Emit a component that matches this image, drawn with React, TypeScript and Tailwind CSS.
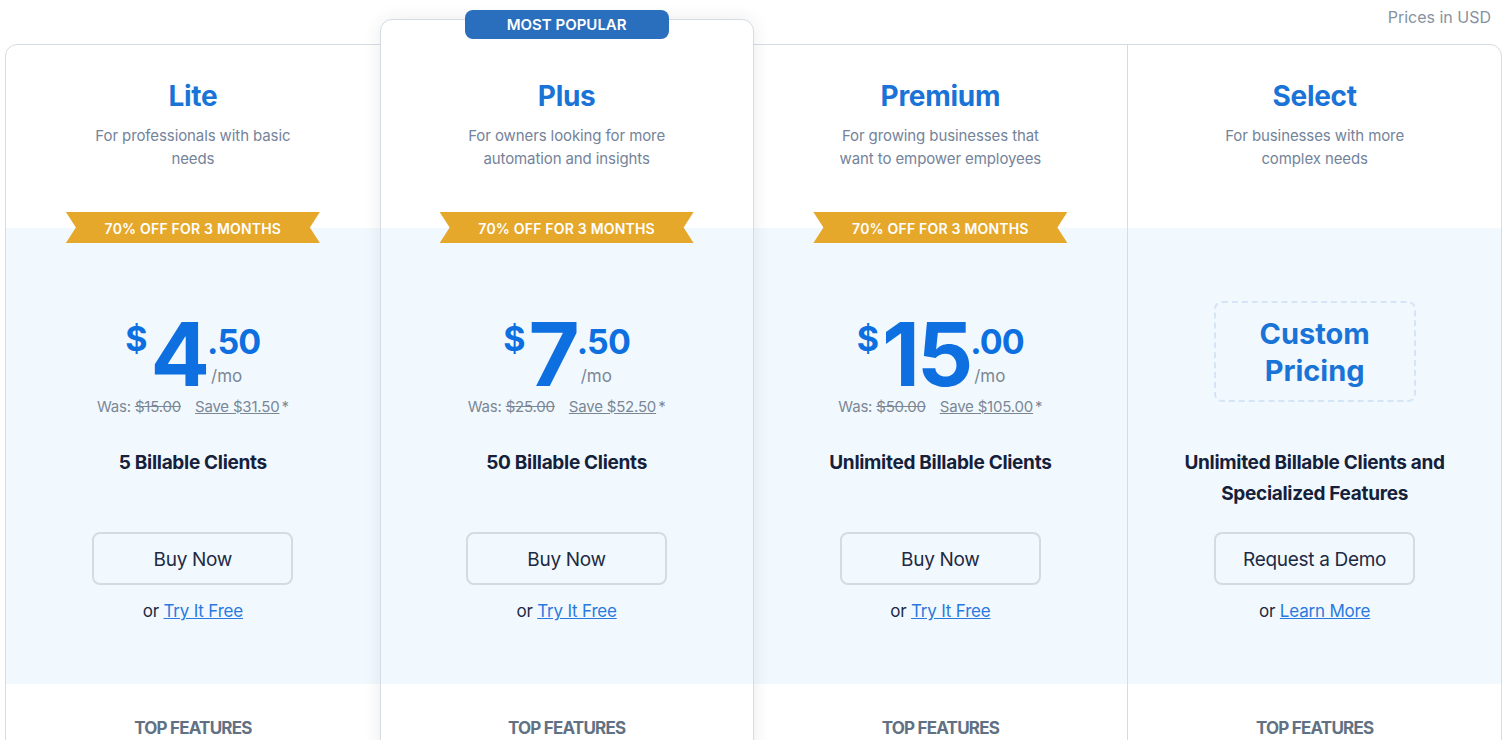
type Plan = {
  name: string
  desc: string
  ribbon?: boolean
  dollars?: string
  cents?: string
  was?: string
  save?: string
  clients: string
  cta: string
  link: string
  popular?: boolean
}

const plans: Plan[] = [
  {
    name: 'Lite',
    desc: 'For professionals with basic needs',
    ribbon: true,
    dollars: '4',
    cents: '.50',
    was: '$15.00',
    save: 'Save $31.50',
    clients: '5 Billable Clients',
    cta: 'Buy Now',
    link: 'Try It Free',
  },
  {
    name: 'Plus',
    desc: 'For owners looking for more automation and insights',
    ribbon: true,
    dollars: '7',
    cents: '.50',
    was: '$25.00',
    save: 'Save $52.50',
    clients: '50 Billable Clients',
    cta: 'Buy Now',
    link: 'Try It Free',
    popular: true,
  },
  {
    name: 'Premium',
    desc: 'For growing businesses that want to empower employees',
    ribbon: true,
    dollars: '15',
    cents: '.00',
    was: '$50.00',
    save: 'Save $105.00',
    clients: 'Unlimited Billable Clients',
    cta: 'Buy Now',
    link: 'Try It Free',
  },
  {
    name: 'Select',
    desc: 'For businesses with more complex needs',
    clients: 'Unlimited Billable Clients and Specialized Features',
    cta: 'Request a Demo',
    link: 'Learn More',
  },
]

function Ribbon() {
  return (
    <div className="absolute left-1/2 bottom-[-15px] -translate-x-1/2 w-[254px] h-[31px] bg-[#e6a82b] flex items-center justify-center pt-[1px] text-white text-[14px] font-semibold tracking-[0.2px] [clip-path:polygon(0_0,100%_0,calc(100%-10px)_50%,100%_100%,0_100%,10px_50%)]">
      70% OFF FOR 3 MONTHS
    </div>
  )
}

function Price({ plan }: { plan: Plan }) {
  if (!plan.dollars) {
    return (
      <div className="pt-[73px] flex justify-center">
        <div className="w-[202px] h-[101px] rounded-lg border-2 border-dashed border-[#d3e5f6] flex items-center justify-center text-center text-[29px] leading-[37px] font-bold text-[#1a73d6]">
          Custom
          <br />
          Pricing
        </div>
      </div>
    )
  }
  return (
    <div className="pt-[82px] flex flex-col items-center">
      <div className="flex items-start text-[#0d6fe0] font-bold h-[86px]">
        <span className="text-[34px] leading-none mt-[12px] mr-[3px]">$</span>
        <span className="text-[88px] leading-none tracking-[-3px]">{plan.dollars}</span>
        <div className="flex flex-col items-start">
          <span className="text-[34px] leading-none mt-[15px] tracking-[-0.8px]">{plan.cents}</span>
          <span className="text-[17px] leading-[18px] font-normal text-[#7a8796] ml-[4px] mt-[8px]">/mo</span>
        </div>
      </div>
      <div className="mt-[3px] text-[15px] leading-[16px] text-[#7a8796] flex items-center tracking-[-0.2px]">
        <span>
          Was: <span className="line-through">{plan.was}</span>
        </span>
        <span className="ml-[14px] underline">{plan.save}</span>
        <span className="ml-[2px]">*</span>
      </div>
    </div>
  )
}

function Column({ plan }: { plan: Plan }) {
  return (
    <div
      className={
        plan.popular
          ? 'relative z-10 -mt-[26px] bg-white border border-[#d6dce3] rounded-t-xl shadow-[0_0_18px_rgba(30,40,60,0.09)] flex flex-col'
          : plan.name === 'Select'
            ? 'border-l border-[#d6dce3] flex flex-col'
            : 'flex flex-col'
      }
    >
      {plan.popular && (
        <div className="absolute -top-[10px] left-1/2 -translate-x-1/2 w-[204px] h-[29px] rounded-lg bg-[#2a6fbd] text-white text-[15px] font-semibold flex items-center justify-center pt-[2px]">
          MOST POPULAR
        </div>
      )}
      <div className={`relative flex flex-col items-center text-center ${plan.popular ? 'h-[208px] pt-[59px]' : 'h-[183px] pt-[34px]'}`}>
        <h2 className="text-[28px] leading-[34px] font-bold text-[#1a73d6] tracking-[-0.3px]">{plan.name}</h2>
        <p className="mt-[11px] w-[215px] text-[15px] leading-[23px] text-[#74839a] tracking-[-0.1px]">{plan.desc}</p>
        {plan.ribbon && <Ribbon />}
      </div>
      <div className="h-[456px] bg-[#f2f9fe] flex flex-col items-center">
        <div className="h-[219px] w-full">
          <Price plan={plan} />
        </div>
        <div className="h-[62px] text-center text-[19px] leading-[31px] font-bold text-[#15213b] w-[320px] tracking-[-0.3px]">
          {plan.clients}
        </div>
        <button className="mt-[23px] w-[201px] h-[53px] pt-[3px] rounded-lg border-2 border-[#d5dbe1] text-[19px] text-[#1d2a44] tracking-[-0.3px]">
          {plan.cta}
        </button>
        <div className="mt-[14px] text-[17px] leading-[24px] text-[#1d2a44] tracking-[-0.2px]">
          or <a className="text-[#2a79df] underline">{plan.link}</a>
        </div>
      </div>
      <div className="h-[200px] pt-[32px] text-center text-[17px] font-bold text-[#617183] tracking-[-0.8px]">
        TOP FEATURES
      </div>
    </div>
  )
}

export default function App() {
  return (
    <div className="h-[740px] w-[1506px] overflow-hidden bg-white font-['Inter','Liberation_Sans',sans-serif]">
      <div className="h-[44px] flex justify-end pr-[15px] pt-[5px] text-[16px] text-[#8592a0]">Prices in USD</div>
      <div className="ml-[5px] mr-[4px] border border-[#d6dce3] rounded-xl">
        <div className="grid grid-cols-4">
          {plans.map((p) => (
            <Column key={p.name} plan={p} />
          ))}
        </div>
      </div>
    </div>
  )
}
